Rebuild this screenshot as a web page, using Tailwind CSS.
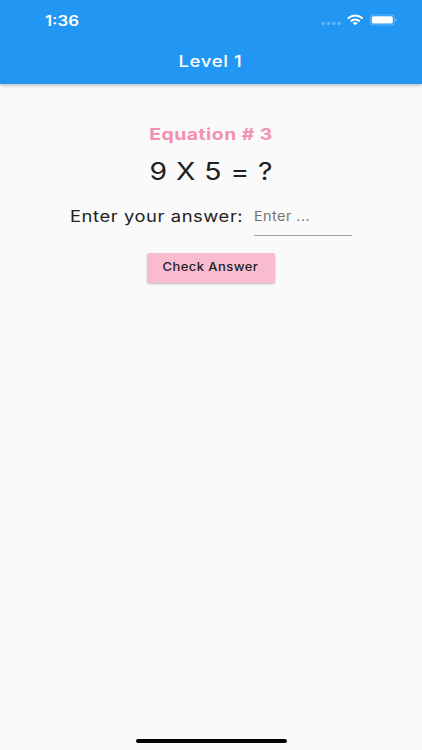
<!DOCTYPE html>
<html lang="en">
<head>
  <meta charset="UTF-8">
  <title>Level 1</title>
  <script src="https://cdn.jsdelivr.net/npm/@tailwindcss/browser@4"></script>
</head>
<body class="bg-[#fafafa] font-[Inter,sans-serif] text-[#212121]">
  <div class="h-[750px] w-[422px] flex flex-col overflow-hidden whitespace-nowrap">
    <header class="h-[83.5px] shrink-0 bg-[#2196f3] text-white shadow-[0_1px_4px_rgba(0,0,0,0.3)]">
      <div class="h-10 pl-[45px] pr-[25px] flex items-center justify-between">
        <span class="pt-px text-[14px] font-semibold leading-[21px] origin-left scale-x-[1.2]">1:36</span>
        <svg class="w-[76px] h-5" viewBox="0 0 76 20" fill="currentColor">
          <g opacity=".3">
            <circle cx="2.2" cy="13.5" r="1.8"/>
            <circle cx="7.5" cy="13.5" r="1.8"/>
            <circle cx="12.8" cy="13.5" r="1.8"/>
            <circle cx="18.1" cy="13.5" r="1.8"/>
          </g>
          <path d="M34.2 15.2l2.6-2.3q-2.6-1.8-5.2 0z"/>
          <path d="M29.5 11.2q4.7-3.6 9.4 0M26.7 8.6q7.5-6 15 0" fill="none" stroke="currentColor" stroke-width="1.9"/>
          <rect x="49.3" y="4.9" width="24" height="10" rx="2.8" fill="none" stroke="currentColor" stroke-opacity=".35" stroke-width=".9"/>
          <rect x="50.8" y="6.3" width="21" height="7.3" rx="1.5"/>
          <path d="M74.6 8.3q2 1.7 0 3.4z" opacity=".5"/>
        </svg>
      </div>
      <h1 class="pr-px text-center text-[16px] font-medium leading-[42px] tracking-[0.5px] scale-x-[1.165]">Level 1</h1>
    </header>
    <main class="flex-1 flex flex-col items-center pt-[38.5px]">
      <h2 class="text-[16px] font-bold leading-6 tracking-[0.4px] text-[#f48fb1] scale-x-[1.21]">Equation # 3</h2>
      <p class="text-[24px] leading-[52px] tracking-[0.4px] scale-x-[1.18]">9 X 5 = ?</p>
      <div class="flex mt-0.5">
        <label for="answer" class="w-[184px] text-[16px] leading-[32px] tracking-[0.5px] origin-left scale-x-[1.148]">Enter your answer:</label>
        <div class="w-[98.5px] h-[36px] border-b border-[#a3a3a3]">
          <input id="answer" placeholder="Enter ..." class="block w-20 h-[32px] text-[13px] tracking-[0.4px] placeholder:text-[#737373] outline-none origin-left scale-x-[1.11]">
        </div>
      </div>
      <button class="mt-[17px] w-[128.5px] h-[30px] bg-[#f8bbd0] rounded-[2px] shadow-[0_1px_2px_rgba(0,0,0,0.25)] flex justify-center">
        <span class="pr-px text-[11.5px] font-medium leading-[29px] tracking-[0.4px] scale-x-[1.13]">Check Answer</span>
      </button>
    </main>
    <div class="w-[151px] h-1 mb-[7px] self-center bg-black rounded-full"></div>
  </div>
</body>
</html>
